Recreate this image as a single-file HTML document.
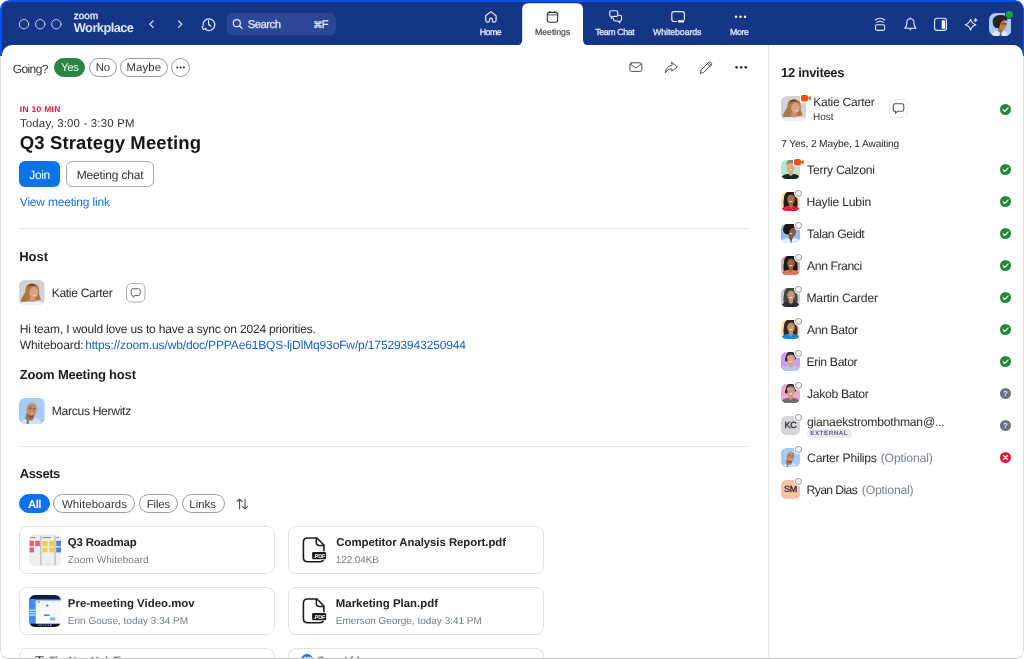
<!DOCTYPE html>
<html lang="en">
<head>
<meta charset="utf-8">
<title>Zoom Workplace - Meetings</title>
<style>
*{box-sizing:border-box;margin:0;padding:0}
html,body{width:1024px;height:659px;overflow:hidden;background:#fff}
body{font-family:"Liberation Sans",sans-serif;color:#222;position:relative;text-rendering:geometricPrecision}
.abs,.t{position:absolute}
.t{white-space:nowrap;line-height:1;text-rendering:geometricPrecision}
#win{position:absolute;left:0;top:0;width:1024px;height:659px;overflow:hidden;border-radius:9px 9px 8px 8px;will-change:transform}
#blue{position:absolute;left:0;top:0;width:1024px;height:80px;background:#0b55e6;border-radius:9px 9px 0 0}
#hdr{position:absolute;left:2px;top:2px;width:1020.5px;height:70px;background:#153586;border-radius:7px 7px 0 0}
#body{position:absolute;left:0;top:56px;width:1024px;height:603px;background:#fff;border:1px solid #dedee0;border-bottom-color:#cbcbce;border-top:none;border-radius:0 0 8px 8px}
#bodytop{position:absolute;left:1.6px;top:44.6px;width:1021px;height:30px;background:#fff;border-radius:10px 10px 0 0}
.pill{position:absolute;height:19.2px;border:1px solid #939ca8;border-radius:10px;background:#fff}
.hr{position:absolute;height:1px;background:#e4e7eb}
.card{position:absolute;width:256px;height:47.5px;border:1px solid #dfe3e9;border-radius:8px;background:#fff}
.av{position:absolute;overflow:hidden}
.ring{position:absolute;width:9px;height:9px;border-radius:50%;background:#fff}
.ring:after{content:"";box-sizing:border-box;position:absolute;left:1px;top:1px;width:7px;height:7px;border-radius:50%;border:1px solid #8a8f96;background:#fff}
.st{position:absolute;left:1000px;width:11px;height:11px}
</style>
</head>
<body>
<div id="win">
<div id="blue"></div><div id="hdr"></div><div id="body"></div><div id="bodytop"></div>
<svg class="abs" style="left:0;top:0" width="1024" height="46" viewBox="0 0 1024 46" fill="none" stroke="#e6ebf7" stroke-width="1.1" stroke-linecap="round" stroke-linejoin="round">
<circle cx="24" cy="24.2" r="4.7" stroke="#d5dcf0" stroke-width="0.9"/><circle cx="40.2" cy="24.2" r="4.7" stroke="#d5dcf0" stroke-width="0.9"/><circle cx="56.3" cy="24.2" r="4.7" stroke="#d5dcf0" stroke-width="0.9"/>
<path d="M153.1 20.8 L149.8 24.1 L153.1 27.4" stroke-width="1.2"/><path d="M178.5 20.8 L181.8 24.1 L178.5 27.4" stroke-width="1.2"/>
<path d="M203.2 26.2 A5.9 5.9 0 1 1 205.6 29.6" stroke-width="1.2"/><path d="M202.0 26.6 L203.4 29.5 L206.2 28.2" stroke-width="1.1"/><path d="M208.6 20.6 V24.4 L211 26.2" stroke-width="1.2"/>
<rect x="226.8" y="13.1" width="109" height="22.1" rx="6" fill="#2c4795" stroke="none"/>
<circle cx="236.8" cy="23.2" r="3.5" stroke-width="1.2"/><path d="M239.4 25.8 L242 28.4" stroke-width="1.3"/>
<path d="M516.4 45.5 Q522.2 45.5 522.2 39.6 V9.5 Q522.2 3.2 528.5 3.2 H576.8 Q583 3.2 583 9.5 V39.6 Q583 45.5 588.8 45.5 Z" fill="#fff" stroke="none"/>
<path d="M490.9 11.6 L496.1 15.7 V20.3 Q496.1 22.1 494.3 22.1 H493.7 Q492.3 22.1 492.3 20.7 V19.5 A1.4 1.4 0 0 0 489.5 19.5 V20.7 Q489.5 22.1 488.1 22.1 H487.5 Q485.7 22.1 485.7 20.3 V15.7 Z" stroke-width="1.2"/>
<g stroke="#333" stroke-width="1.1"><rect x="547.3" y="12.4" width="10.4" height="9.8" rx="2.2"/><path d="M547.5 14.9 H557.5" stroke-width="0.9"/><path d="M549.8 11.2 V12.4 M554.8 11.2 V12.4"/></g>
<path d="M611.1 10.7 H616.3 Q617.7 10.7 617.7 12.1 V15 Q617.7 16.4 616.3 16.4 H613.2 L611.3 18.4 V16.4 H611.1 Q609.7 16.4 609.7 15 V12.1 Q609.7 10.7 611.1 10.7 Z" stroke-width="1.1"/>
<path d="M618 15.3 H620.1 Q621.5 15.3 621.5 16.7 V19.6 Q621.5 21 620.1 21 H619.9 V22.8 L617.9 21 H614.9 Q613.5 21 613.5 19.6 V18.2" stroke-width="1.1"/>
<rect x="671.8" y="11.6" width="12.6" height="9.9" rx="2.2" stroke-width="1.2"/><rect x="676.9" y="19.4" width="8.6" height="3.9" rx="1.9" fill="#153586" stroke="none"/><rect x="677.8" y="20.2" width="6.6" height="2.3" rx="1.15" fill="#fff" stroke="none"/>
<g fill="#fff" stroke="none"><circle cx="736" cy="16.8" r="1.25"/><circle cx="740.5" cy="16.8" r="1.25"/><circle cx="745" cy="16.8" r="1.25"/></g>
<rect x="875.5" y="24.8" width="9.1" height="5.6" rx="1.6" stroke-width="1.1"/><path d="M876.7 22.4 Q880 20.2 883.4 22.4" stroke-width="1.1"/><path d="M875.2 20 Q880 16.6 884.8 20" stroke-width="1.1"/>
<path d="M904.7 28.3 Q906.6 26.4 906.9 23.6 V22.2 A3.5 3.5 0 0 1 913.9 22.2 V23.6 Q914.2 26.4 916.1 28.3 Z" stroke-width="1.1"/><path d="M910.4 17.9 V18.6" stroke-width="1.1"/><path d="M909.2 28.6 Q910.4 31.6 911.6 28.6" stroke-width="1"/>
<rect x="934.6" y="18.2" width="11.9" height="12.2" rx="2.4" stroke-width="1.1"/><rect x="941.7" y="20.2" width="3.5" height="8.5" rx="0.5" fill="#fff" stroke="none"/>
<path d="M970.6 19.2 Q971.6 23.6 975.9 24.7 Q971.6 25.8 970.6 30.2 Q969.6 25.8 965.3 24.7 Q969.6 23.6 970.6 19.2 Z" stroke-width="1.1"/><path d="M975.6 18.4 Q975.9 19.9 977.3 20.2 Q975.9 20.5 975.6 22 Q975.3 20.5 973.9 20.2 Q975.3 19.9 975.6 18.4 Z" stroke-width="0.6" fill="#e6ebf7"/>
</svg>
<svg class="abs" style="left:988.6px;top:12.7px" width="22.8" height="23" viewBox="0 0 24 24"><defs><clipPath id="ua"><rect width="24" height="24" rx="7"/></clipPath></defs><g clip-path="url(#ua)"><rect width="24" height="24" fill="#a9cdf7"/><path d="M2.5 24 Q4 19.6 8.6 18.6 L13 21 L16 18.8 Q19 19.6 20 24 Z" fill="#e4eaf2"/><path d="M11.4 21.4 L12.8 21 L13.4 24 L10.8 24 Z" fill="#3560b0"/><path d="M10.4 14.6 L15 17.2 L13 21.2 L9.2 19 Z" fill="#a9683f"/><ellipse cx="14.6" cy="12.6" rx="3.9" ry="5.2" fill="#bf7a52"/><path d="M4 10.5 C3 4.5 8 1.6 12.6 2 C17.6 1.6 20 5 19.2 8.6 C17.6 7 15.2 7.2 13.6 8.6 C11.8 10.2 11.6 13 10.6 15.8 C6 16.8 4.4 13.6 4 10.5 Z" fill="#2b211d"/><path d="M13.2 11.4 H18.6" stroke="#1a1a1a" stroke-width="0.8"/><path d="M15.6 14.8 Q17 15.4 18 14.4 Q17.4 16 15.6 14.8 Z" fill="#fff"/></g></svg>
<div class="abs" style="left:1005.1px;top:10px;width:8.8px;height:8.8px;border-radius:50%;background:#153586"></div>
<div class="abs" style="left:1006.1px;top:11px;width:6.8px;height:6.8px;border-radius:50%;background:#0ea83c"></div>

<div class="pill" style="left:53.7px;top:57.6px;width:31.8px;background:#278443;border-color:#278443"></div>
<div class="pill" style="left:88.9px;top:57.6px;width:27.9px"></div>
<div class="pill" style="left:120px;top:57.6px;width:47.8px"></div>
<div class="pill" style="left:171.4px;top:57.6px;width:19px"></div>
<svg class="abs" style="left:171.4px;top:57.6px" width="19" height="19"><g fill="#333"><circle cx="6.3" cy="9.5" r="1.05"/><circle cx="9.6" cy="9.5" r="1.05"/><circle cx="12.9" cy="9.5" r="1.05"/></g></svg>
<svg class="abs" style="left:620px;top:55px" width="140" height="26" viewBox="620 55 140 26" fill="none" stroke="#505054" stroke-width="1" stroke-linecap="round" stroke-linejoin="round">
<rect x="629.9" y="62.8" width="11.9" height="8.6" rx="1.6"/><path d="M630.3 64.2 L635.8 67.9 L641.4 64.2"/>
<path d="M671.8 62.4 L677.4 66.8 L671.8 71.2 V68.9 Q667.6 68.6 665.4 72.8 Q665.6 66.4 671.8 65.4 Z"/>
<path d="M700.4 73 L701.1 69.9 L708.8 62.2 Q709.7 61.4 710.6 62.2 L711.5 63.1 Q712.3 64 711.5 64.9 L703.6 72.4 Z M707.4 63.8 L709.9 66.3 M708.5 62.7 L711 65.2"/>
<g fill="#333" stroke="none"><circle cx="736.6" cy="67.3" r="1.35"/><circle cx="741.2" cy="67.3" r="1.35"/><circle cx="745.8" cy="67.3" r="1.35"/></g>
</svg>
<div class="abs" style="left:19px;top:161.4px;width:41px;height:26px;border-radius:6px;background:#0e72ed"></div>
<div class="abs" style="left:66.4px;top:161.4px;width:87.4px;height:26px;border-radius:6px;border:1px solid #a4abb5"></div>
<div class="hr" style="left:19.5px;top:228px;width:728.5px"></div>
<svg class="av" style="left:19.4px;top:279.7px;border-radius:6px" width="25.5" height="25.8" viewBox="0 0 26 26"><rect width="26" height="26" fill="#d2d2d6"/><path d="M14 3.6 C9 3 6.2 7 6.6 11 C6.2 14 3 16 1.6 21.4 L8 23 L12 21 L18 21 C20.6 20.6 21.6 19.6 22.6 20.6 C21.6 17 20 15 20.6 11 C20.6 6 18 3.8 14 3.6 Z" fill="#a87844"/><path d="M14 3.6 C11 3.4 9 5 8.2 7.4 C10.4 5.6 13.6 5 17 6 C16.4 4.6 15.4 3.8 14 3.6 Z" fill="#5e3d22"/><path d="M11 16.6 L16.6 18 L16.4 22 L10.6 22 Z" fill="#cf9276"/><ellipse cx="15" cy="12.4" rx="4.5" ry="5.6" transform="rotate(8 15 12.4)" fill="#dba084"/><path d="M13.4 14.6 Q16 16 18 13.8 Q16.8 17.4 13.4 14.6 Z" fill="#fff"/><path d="M0 26 V24 Q5 21.4 10 21.8 Q13.4 23.4 17 21.8 Q22 21.4 26 24 V26 Z" fill="#eef0f5"/></svg>
<svg class="abs" style="left:126.4px;top:282.9px" width="20" height="20" fill="none" stroke="#58585c" stroke-linejoin="round"><rect x="0.5" y="0.5" width="18.5" height="18.5" rx="4.8" stroke="#a6aeba"/><path d="M6.75 5.75 H12.55 Q14.15 5.75 14.15 7.35 V10.85 Q14.15 12.45 12.55 12.45 H9 L7 14.4 V12.45 H6.75 Q5.15 12.45 5.15 10.85 V7.35 Q5.15 5.75 6.75 5.75 Z" stroke-width="0.95"/></svg>
<svg class="av" style="left:19.4px;top:398.3px;border-radius:6px" width="25.5" height="25.8" viewBox="0 0 26 26"><rect width="26" height="26" fill="#a5cbf7"/><path d="M1 26 Q3 22.4 8 21 L17 20.6 Q21.4 21.6 23 26 Z" fill="#d2def1"/><path d="M7.6 15 L15.6 18 L14 22.6 L8.4 23.4 L6.4 20.6 Z" fill="#a87450"/><ellipse cx="12.9" cy="11.6" rx="5.2" ry="7" transform="rotate(12 12.9 11.6)" fill="#c08a62"/><path d="M10 6.4 Q13.4 3.8 17 6.6 Q13.6 5.8 10 6.4 Z" fill="#e0b088"/><path d="M8.6 15.6 Q12 19.6 16 16.4 Q15 20.8 11.6 20.4 Q9.2 19.6 8.6 15.6 Z" fill="#7a5238" opacity="0.75"/><path d="M10.6 15.2 Q12.8 16.6 15 14.8 Q13.8 17.6 10.6 15.2 Z" fill="#fff"/><ellipse cx="11.6" cy="10.2" rx="1" ry="0.6" fill="#4a2e1e"/><ellipse cx="15.4" cy="10.8" rx="1" ry="0.6" fill="#4a2e1e"/><path d="M7.4 25.8 L8.8 22.6 L10.4 25.8 Z" fill="#3c64b0"/></svg>
<div class="hr" style="left:19.5px;top:445.5px;width:728.5px"></div>
<div class="pill" style="left:19.1px;top:494.3px;width:30.7px;background:#0e72ed;border-color:#0e72ed"></div>
<div class="pill" style="left:53.3px;top:494.3px;width:81.8px"></div>
<div class="pill" style="left:138.6px;top:494.3px;width:39.7px"></div>
<div class="pill" style="left:181.8px;top:494.3px;width:43.2px"></div>
<svg class="abs" style="left:235px;top:496.5px" width="16" height="14" fill="none" stroke="#444" stroke-width="1.05" stroke-linecap="round" stroke-linejoin="round"><path d="M4.6 12 V2 M2 4.6 L4.6 2 L7.2 4.6 M10 2 V12 M7.4 9.4 L10 12 L12.6 9.4"/></svg>
<div class="card" style="left:19px;top:526px"><svg class="abs" style="left:8.8px;top:7.2px;border-radius:5px" width="32" height="32" viewBox="0 0 32 32"><rect width="32" height="32" fill="#efeff1"/><path d="M11.9 2 V31 M26 2 V31" stroke="#77777c" stroke-width="0.55"/><path d="M1.5 3.6 H6.5 M13.5 3.6 H22 M27.5 3.6 H30" stroke="#55555a" stroke-width="0.7"/><g fill="#e0626c"><rect x="0.6" y="6.8" width="4.3" height="5.4"/><rect x="6.2" y="6.8" width="4.6" height="5.4"/><rect x="0.6" y="13.4" width="4.3" height="5"/></g><g fill="#f3cb4c"><rect x="13.5" y="6.8" width="5" height="5.4"/><rect x="20.2" y="6.8" width="5" height="5.4"/><rect x="13.5" y="13.4" width="5" height="5"/><rect x="20.2" y="13.4" width="5" height="5"/></g><g fill="#4f7fdb"><rect x="27.2" y="6.8" width="4.8" height="5.4"/><rect x="27.2" y="13.4" width="4.8" height="5"/></g></svg></div>
<div class="card" style="left:288px;top:526px"><svg class="abs" style="left:12px;top:9px" width="28" height="29" viewBox="0 0 28 29" fill="none" stroke="#1b1b1d" stroke-width="1.6" stroke-linejoin="round" stroke-linecap="round"><path d="M16 2 H6.6 Q2.4 2 2.4 6.2 V21.6 Q2.4 25.8 6.6 25.8 H18.7 Q22.9 25.8 22.9 21.6 V9 Z"/><path d="M15.3 2.6 V6.6 Q15.3 9.4 18.1 9.4 H22.4" stroke-width="1.5"/><rect x="10.4" y="15.3" width="15.4" height="8.7" rx="1.6" fill="#fff" stroke="none"/><rect x="11.1" y="16" width="14" height="7.3" rx="1.2" fill="#1b1b1d" stroke="none"/><text x="18.2" y="21.7" font-family="Liberation Sans, sans-serif" font-size="5.4" font-weight="bold" fill="#fff" stroke="none" text-anchor="middle" letter-spacing="-0.15">.PDF</text></svg></div>
<div class="card" style="left:19px;top:587px"><svg class="abs" style="left:9.2px;top:6.9px;border-radius:6px" width="32" height="32" viewBox="0 0 32 32"><rect width="32" height="32" fill="#f8fafe"/><rect width="32" height="4.2" fill="#111d36"/><rect y="4" width="32" height="1.4" fill="#2f6fcd"/><rect y="4" width="6.7" height="25" fill="#3c8cf1"/><rect y="28.7" width="32" height="3.3" fill="#12141c"/><rect x="7.4" y="6.6" width="24" height="0.8" fill="#dfe6f2"/><rect x="8.6" y="6.2" width="2" height="1.4" fill="#3c8cf1"/><rect x="17.2" y="9.4" width="2.2" height="2.2" rx="0.5" fill="#3f7fe8"/><rect x="15" y="19.4" width="5.6" height="1.6" fill="#3f8ff0"/><rect x="21" y="22.4" width="5.2" height="3" fill="#7db4f5"/><rect x="0.4" y="14.4" width="6" height="1.3" fill="#d6e8ff"/><rect x="0.4" y="16.9" width="6" height="1.3" fill="#d6e8ff"/><rect x="0.4" y="19.4" width="6" height="1.3" fill="#d6e8ff"/><g fill="#4a78d0"><rect x="9" y="29.4" width="1.6" height="1.6"/><rect x="11.4" y="29.4" width="1.6" height="1.6"/><rect x="13.8" y="29.4" width="1.6" height="1.6" fill="#2a62e0"/><rect x="16.2" y="29.4" width="1.6" height="1.6" fill="#c04848"/><rect x="18.6" y="29.4" width="1.6" height="1.6"/><rect x="21" y="29.4" width="1.6" height="1.6" fill="#8a8e98"/></g></svg></div>
<div class="card" style="left:288px;top:587px"><svg class="abs" style="left:12px;top:9px" width="28" height="29" viewBox="0 0 28 29" fill="none" stroke="#1b1b1d" stroke-width="1.6" stroke-linejoin="round" stroke-linecap="round"><path d="M16 2 H6.6 Q2.4 2 2.4 6.2 V21.6 Q2.4 25.8 6.6 25.8 H18.7 Q22.9 25.8 22.9 21.6 V9 Z"/><path d="M15.3 2.6 V6.6 Q15.3 9.4 18.1 9.4 H22.4" stroke-width="1.5"/><rect x="10.4" y="15.3" width="15.4" height="8.7" rx="1.6" fill="#fff" stroke="none"/><rect x="11.1" y="16" width="14" height="7.3" rx="1.2" fill="#1b1b1d" stroke="none"/><text x="18.2" y="21.7" font-family="Liberation Sans, sans-serif" font-size="5.4" font-weight="bold" fill="#fff" stroke="none" text-anchor="middle" letter-spacing="-0.15">.PDF</text></svg></div>
<div class="card" style="left:19px;top:647.6px;border-bottom:none;border-radius:8px 8px 0 0;height:11px"><div class="t" style="left:15.4px;top:5.4px;font-size:12px;line-height:12px;font-weight:bold;color:#111;font-family:'Liberation Serif',serif">T</div></div>
<div class="card" style="left:288px;top:647.6px;border-bottom:none;border-radius:8px 8px 0 0;height:11px"><div class="abs" style="left:12.1px;top:5.4px;width:12.3px;height:12.3px;border-radius:50%;background:#1f6fee"></div><div class="t" style="left:14.4px;top:7.6px;font-size:6px;line-height:6px;font-weight:bold;color:#fff">zm</div></div>
<div class="abs" style="left:767.5px;top:45px;width:1px;height:613px;background:#e4e6ea"></div>
<svg class="av" style="left:781.2px;top:96px;border-radius:6px" width="25" height="25" viewBox="0 0 20 20"><g transform="scale(0.7692)"><rect width="26" height="26" fill="#d2d2d6"/><path d="M14 3.6 C9 3 6.2 7 6.6 11 C6.2 14 3 16 1.6 21.4 L8 23 L12 21 L18 21 C20.6 20.6 21.6 19.6 22.6 20.6 C21.6 17 20 15 20.6 11 C20.6 6 18 3.8 14 3.6 Z" fill="#a87844"/><path d="M14 3.6 C11 3.4 9 5 8.2 7.4 C10.4 5.6 13.6 5 17 6 C16.4 4.6 15.4 3.8 14 3.6 Z" fill="#5e3d22"/><path d="M11 16.6 L16.6 18 L16.4 22 L10.6 22 Z" fill="#cf9276"/><ellipse cx="15" cy="12.4" rx="4.5" ry="5.6" transform="rotate(8 15 12.4)" fill="#dba084"/><path d="M13.4 14.6 Q16 16 18 13.8 Q16.8 17.4 13.4 14.6 Z" fill="#fff"/><path d="M0 26 V24 Q5 21.4 10 21.8 Q13.4 23.4 17 21.8 Q22 21.4 26 24 V26 Z" fill="#eef0f5"/></g></svg>
<svg class="abs" style="left:799.6px;top:93.6px" width="12" height="9" viewBox="0 0 12 9"><rect x="0" y="0" width="9.6" height="8.6" rx="2.6" fill="#fff"/><rect x="1" y="1" width="7" height="6.4" rx="1.7" fill="#f4510b"/><path d="M8 4.2 L10.4 2.2 V6.2 Z" fill="#f4510b" stroke="#f4510b" stroke-width="0.6" stroke-linejoin="round"/></svg>
<svg class="abs" style="left:888.8px;top:99px" width="20" height="20" fill="none" stroke="#505054" stroke-linejoin="round"><rect x="0.5" y="0.5" width="18.1" height="18.1" rx="4.6" stroke="#e4e7ed"/><path d="M6.1 4.8 H13 Q14.8 4.8 14.8 6.6 V10.4 Q14.8 12.2 13 12.2 H8.6 L6.5 14.4 V12.2 H6.1 Q4.3 12.2 4.3 10.4 V6.6 Q4.3 4.8 6.1 4.8 Z" stroke-width="1.1"/></svg>
<svg class="st" style="top:103.5px" viewBox="0 0 11 11"><circle cx="5.5" cy="5.5" r="5.5" fill="#26843f"/><path d="M3 5.7 L4.8 7.5 L8.1 3.9" fill="none" stroke="#fff" stroke-width="1.15" stroke-linecap="round" stroke-linejoin="round"/></svg>
<svg class="av" style="left:781px;top:159.9px;border-radius:5.4px" width="19" height="19" viewBox="0 0 20 20"><rect width="20" height="20" fill="#b5e6c8"/><g transform="translate(10 21.5) scale(1.28) translate(-10 -20)"><path d="M1.6 20 Q2.4 15.4 7.4 14.8 L13 14.8 Q18 15.4 18.6 20 Z" fill="#1d2228"/><path d="M8.6 12 H12 V15.2 L10.3 16.4 L8.6 15.2 Z" fill="#d9a98a"/><ellipse cx="10.2" cy="9.2" rx="3.2" ry="4.1" fill="#d9a98a"/><path d="M6.6 7.6 Q6.4 3 10.2 3 Q14 3 13.8 7.6 Q12.4 5.4 10.2 5.6 Q8 5.4 6.6 7.6 Z" fill="#8c8274"/><path d="M8.8 10.8 Q10.3 12.4 11.8 10.8 Z" fill="#fff"/></g></svg>
<svg class="abs" style="left:792.8px;top:157.9px" width="12" height="9" viewBox="0 0 12 9"><rect x="0" y="0" width="9.6" height="8.6" rx="2.6" fill="#fff"/><rect x="1" y="1" width="7" height="6.4" rx="1.7" fill="#f4510b"/><path d="M8 4.2 L10.4 2.2 V6.2 Z" fill="#f4510b" stroke="#f4510b" stroke-width="0.6" stroke-linejoin="round"/></svg>
<svg class="st" style="top:164.0px" viewBox="0 0 11 11"><circle cx="5.5" cy="5.5" r="5.5" fill="#26843f"/><path d="M3 5.7 L4.8 7.5 L8.1 3.9" fill="none" stroke="#fff" stroke-width="1.15" stroke-linecap="round" stroke-linejoin="round"/></svg>
<svg class="av" style="left:781px;top:191.9px;border-radius:5.4px" width="19" height="19" viewBox="0 0 20 20"><rect width="20" height="20" fill="#fbe2ad"/><g transform="translate(10 21.5) scale(1.28) translate(-10 -20)"><path d="M4.6 9 Q4.6 2.6 10.2 2.6 Q15.8 2.6 15.6 9 Q16.4 13.6 15.2 16.4 L5 16.8 Q3.6 13 4.6 9 Z" fill="#2a1a16"/><path d="M1.6 20 Q2.4 15.4 7.4 14.8 L13 14.8 Q18 15.4 18.6 20 Z" fill="#e0203c"/><path d="M8.6 12 H12 V15.2 L10.3 16.4 L8.6 15.2 Z" fill="#a86a4a"/><ellipse cx="10.4" cy="9.4" rx="3.1" ry="4" fill="#a86a4a"/><path d="M8.8 10.8 Q10.3 12.4 11.8 10.8 Z" fill="#fff"/></g></svg>
<div class="ring" style="left:793.9px;top:189.1px"></div>
<svg class="st" style="top:196.0px" viewBox="0 0 11 11"><circle cx="5.5" cy="5.5" r="5.5" fill="#26843f"/><path d="M3 5.7 L4.8 7.5 L8.1 3.9" fill="none" stroke="#fff" stroke-width="1.15" stroke-linecap="round" stroke-linejoin="round"/></svg>
<svg class="av" style="left:781px;top:223.9px;border-radius:5.4px" width="19" height="19" viewBox="0 0 20 20"><rect width="20" height="20" fill="#8dbbf5"/><g transform="translate(10 21.5) scale(1.28) translate(-10 -20)"><path d="M1.6 20 Q2.4 15.4 7.4 14.8 L13 14.8 Q18 15.4 18.6 20 Z" fill="#e6ecf4"/><path d="M8.6 12 H12 V15.2 L10.3 16.4 L8.6 15.2 Z" fill="#8a5a3c"/><ellipse cx="11.4" cy="9.8" rx="3.1" ry="4" fill="#8a5a3c"/><path d="M4 8.6 Q3.4 2.4 9.6 2.2 Q15.4 2 15.2 7 Q13 5.8 11 6.8 Q8.8 7.8 9 11.6 Q4.4 12.4 4 8.6 Z" fill="#1f1714"/><path d="M8.8 10.8 Q10.3 12.4 11.8 10.8 Z" fill="#fff"/><path d="M9.6 15.4 L10.4 20 L11.4 15.4 Z" fill="#3b5ca8"/></g></svg>
<div class="ring" style="left:793.9px;top:221.1px"></div>
<svg class="st" style="top:228.0px" viewBox="0 0 11 11"><circle cx="5.5" cy="5.5" r="5.5" fill="#26843f"/><path d="M3 5.7 L4.8 7.5 L8.1 3.9" fill="none" stroke="#fff" stroke-width="1.15" stroke-linecap="round" stroke-linejoin="round"/></svg>
<svg class="av" style="left:781px;top:255.9px;border-radius:5.4px" width="19" height="19" viewBox="0 0 20 20"><rect width="20" height="20" fill="#cdb3a9"/><g transform="translate(10 21.5) scale(1.28) translate(-10 -20)"><path d="M4.6 9 Q4.6 2.6 10.2 2.6 Q15.8 2.6 15.6 9 Q16.4 13.6 15.2 16.4 L5 16.8 Q3.6 13 4.6 9 Z" fill="#1d1512"/><path d="M1.6 20 Q2.4 15.4 7.4 14.8 L13 14.8 Q18 15.4 18.6 20 Z" fill="#e8705c"/><path d="M8.6 12 H12 V15.2 L10.3 16.4 L8.6 15.2 Z" fill="#9a6244"/><ellipse cx="10.4" cy="9.4" rx="3.1" ry="4" fill="#9a6244"/><path d="M8.8 10.8 Q10.3 12.4 11.8 10.8 Z" fill="#fff"/></g></svg>
<div class="ring" style="left:793.9px;top:253.1px"></div>
<svg class="st" style="top:260.0px" viewBox="0 0 11 11"><circle cx="5.5" cy="5.5" r="5.5" fill="#26843f"/><path d="M3 5.7 L4.8 7.5 L8.1 3.9" fill="none" stroke="#fff" stroke-width="1.15" stroke-linecap="round" stroke-linejoin="round"/></svg>
<svg class="av" style="left:781px;top:287.9px;border-radius:5.4px" width="19" height="19" viewBox="0 0 20 20"><rect width="20" height="20" fill="#c8cad2"/><g transform="translate(10 21.5) scale(1.28) translate(-10 -20)"><path d="M4.6 9 Q4.6 2.6 10.2 2.6 Q15.8 2.6 15.6 9 Q16.4 13.6 15.2 16.4 L5 16.8 Q3.6 13 4.6 9 Z" fill="#4a4440"/><path d="M1.6 20 Q2.4 15.4 7.4 14.8 L13 14.8 Q18 15.4 18.6 20 Z" fill="#2a2c34"/><path d="M8.6 12 H12 V15.2 L10.3 16.4 L8.6 15.2 Z" fill="#c49474"/><ellipse cx="10.4" cy="9.4" rx="3.1" ry="4" fill="#c49474"/><path d="M8.8 10.8 Q10.3 12.4 11.8 10.8 Z" fill="#fff"/></g></svg>
<div class="ring" style="left:793.9px;top:285.1px"></div>
<svg class="st" style="top:292.0px" viewBox="0 0 11 11"><circle cx="5.5" cy="5.5" r="5.5" fill="#26843f"/><path d="M3 5.7 L4.8 7.5 L8.1 3.9" fill="none" stroke="#fff" stroke-width="1.15" stroke-linecap="round" stroke-linejoin="round"/></svg>
<svg class="av" style="left:781px;top:319.9px;border-radius:5.4px" width="19" height="19" viewBox="0 0 20 20"><rect width="20" height="20" fill="#fbe2ad"/><g transform="translate(10 21.5) scale(1.28) translate(-10 -20)"><path d="M4.6 9 Q4.6 2.6 10.2 2.6 Q15.8 2.6 15.6 9 Q16.4 13.6 15.2 16.4 L5 16.8 Q3.6 13 4.6 9 Z" fill="#3a2a24"/><path d="M1.6 20 Q2.4 15.4 7.4 14.8 L13 14.8 Q18 15.4 18.6 20 Z" fill="#1f86d8"/><path d="M8.6 12 H12 V15.2 L10.3 16.4 L8.6 15.2 Z" fill="#c98f70"/><ellipse cx="10.4" cy="9.4" rx="3.1" ry="4" fill="#c98f70"/><path d="M8.8 10.8 Q10.3 12.4 11.8 10.8 Z" fill="#fff"/></g></svg>
<div class="ring" style="left:793.9px;top:317.1px"></div>
<svg class="st" style="top:324.0px" viewBox="0 0 11 11"><circle cx="5.5" cy="5.5" r="5.5" fill="#26843f"/><path d="M3 5.7 L4.8 7.5 L8.1 3.9" fill="none" stroke="#fff" stroke-width="1.15" stroke-linecap="round" stroke-linejoin="round"/></svg>
<svg class="av" style="left:781px;top:351.9px;border-radius:5.4px" width="19" height="19" viewBox="0 0 20 20"><rect width="20" height="20" fill="#c7a2ef"/><g transform="translate(10 21.5) scale(1.28) translate(-10 -20)"><path d="M1.6 20 Q2.4 15.4 7.4 14.8 L13 14.8 Q18 15.4 18.6 20 Z" fill="#b7c7e8"/><path d="M8.6 12 H12 V15.2 L10.3 16.4 L8.6 15.2 Z" fill="#d9a585"/><ellipse cx="10.2" cy="9.2" rx="3.2" ry="4.1" fill="#d9a585"/><path d="M6.6 7.6 Q6.4 3 10.2 3 Q14 3 13.8 7.6 Q12.4 5.4 10.2 5.6 Q8 5.4 6.6 7.6 Z" fill="#5a3e2c"/><path d="M8.8 10.8 Q10.3 12.4 11.8 10.8 Z" fill="#fff"/><path d="M6.4 9.4 Q6.2 3.6 10.2 3.6 Q14.2 3.6 14 9.4" fill="none" stroke="#222" stroke-width="0.9"/><rect x="5.6" y="8" width="1.8" height="3" rx="0.8" fill="#222"/></g></svg>
<div class="ring" style="left:793.9px;top:349.1px"></div>
<svg class="st" style="top:356.0px" viewBox="0 0 11 11"><circle cx="5.5" cy="5.5" r="5.5" fill="#26843f"/><path d="M3 5.7 L4.8 7.5 L8.1 3.9" fill="none" stroke="#fff" stroke-width="1.15" stroke-linecap="round" stroke-linejoin="round"/></svg>
<svg class="av" style="left:781px;top:383.9px;border-radius:5.4px" width="19" height="19" viewBox="0 0 20 20"><rect width="20" height="20" fill="#f4a5c8"/><g transform="translate(10 21.5) scale(1.28) translate(-10 -20)"><path d="M1.6 20 Q2.4 15.4 7.4 14.8 L13 14.8 Q18 15.4 18.6 20 Z" fill="#70706c"/><path d="M8.6 12 H12 V15.2 L10.3 16.4 L8.6 15.2 Z" fill="#c99a80"/><ellipse cx="10.2" cy="9.2" rx="3.2" ry="4.1" fill="#c99a80"/><path d="M6.6 7.6 Q6.4 3 10.2 3 Q14 3 13.8 7.6 Q12.4 5.4 10.2 5.6 Q8 5.4 6.6 7.6 Z" fill="#5a5652"/><path d="M8.8 10.8 Q10.3 12.4 11.8 10.8 Z" fill="#fff"/><path d="M6.4 9.4 Q6.2 3.6 10.2 3.6 Q14.2 3.6 14 9.4" fill="none" stroke="#222" stroke-width="0.9"/><rect x="5.6" y="8" width="1.8" height="3" rx="0.8" fill="#222"/></g></svg>
<div class="ring" style="left:793.9px;top:381.1px"></div>
<svg class="st" style="top:388.0px" viewBox="0 0 11 11"><circle cx="5.5" cy="5.5" r="5.5" fill="#6c7281"/><text x="5.5" y="8.1" font-family="Liberation Sans, sans-serif" font-size="7.4" font-weight="bold" fill="#e6e8ee" text-anchor="middle">?</text></svg>
<div class="av" style="left:781px;top:415.9px;width:19px;height:19px;border-radius:5.4px;background:#d6d6da;font-size:9px;-webkit-text-stroke:0.3px #2a2a2c;color:#2a2a2c;text-align:center;line-height:19.6px;letter-spacing:-0.2px">KC</div>
<div class="abs" style="left:806.6px;top:429.2px;width:45.2px;height:8.6px;border-radius:4.3px;background:#e9e9f1;color:#5d5d7c;font-size:6.3px;font-weight:bold;letter-spacing:0.5px;line-height:9.8px;text-align:center">EXTERNAL</div>
<div class="ring" style="left:793.9px;top:413.1px"></div>
<svg class="st" style="top:420.0px" viewBox="0 0 11 11"><circle cx="5.5" cy="5.5" r="5.5" fill="#6c7281"/><text x="5.5" y="8.1" font-family="Liberation Sans, sans-serif" font-size="7.4" font-weight="bold" fill="#e6e8ee" text-anchor="middle">?</text></svg>
<svg class="av" style="left:781px;top:447.9px;border-radius:5.4px" width="19" height="19" viewBox="0 0 20 20"><g transform="scale(0.7692)"><rect width="26" height="26" fill="#a5cbf7"/><path d="M1 26 Q3 22.4 8 21 L17 20.6 Q21.4 21.6 23 26 Z" fill="#d2def1"/><path d="M7.6 15 L15.6 18 L14 22.6 L8.4 23.4 L6.4 20.6 Z" fill="#a87450"/><ellipse cx="12.9" cy="11.6" rx="5.2" ry="7" transform="rotate(12 12.9 11.6)" fill="#c08a62"/><path d="M10 6.4 Q13.4 3.8 17 6.6 Q13.6 5.8 10 6.4 Z" fill="#e0b088"/><path d="M8.6 15.6 Q12 19.6 16 16.4 Q15 20.8 11.6 20.4 Q9.2 19.6 8.6 15.6 Z" fill="#7a5238" opacity="0.75"/><path d="M10.6 15.2 Q12.8 16.6 15 14.8 Q13.8 17.6 10.6 15.2 Z" fill="#fff"/><ellipse cx="11.6" cy="10.2" rx="1" ry="0.6" fill="#4a2e1e"/><ellipse cx="15.4" cy="10.8" rx="1" ry="0.6" fill="#4a2e1e"/><path d="M7.4 25.8 L8.8 22.6 L10.4 25.8 Z" fill="#3c64b0"/></g></svg>
<div class="ring" style="left:793.9px;top:445.1px"></div>
<svg class="st" style="top:452.0px" viewBox="0 0 11 11"><circle cx="5.5" cy="5.5" r="5.5" fill="#e0173d"/><path d="M3.5 3.5 L7.5 7.5 M7.5 3.5 L3.5 7.5" fill="none" stroke="#fff" stroke-width="1.15" stroke-linecap="round"/></svg>
<div class="av" style="left:781px;top:479.9px;width:19px;height:19px;border-radius:5.4px;background:#f9c3a3;font-size:9px;-webkit-text-stroke:0.3px #2a2a2c;color:#2a2a2c;text-align:center;line-height:19.6px;letter-spacing:-0.2px">SM</div>
<div class="ring" style="left:793.9px;top:477.1px"></div>
<!-- text -->
<div class="t" id="zoom" style="left:73.80px;top:11px;line-height:11px;font-size:9.8px;color:#e3e8f6;letter-spacing:0.110px;-webkit-text-stroke:0.35px #e3e8f6">zoom</div>
<div class="t" id="wp" style="left:73.80px;top:20px;line-height:15px;font-size:12.8px;color:#dde3f4;letter-spacing:-0.537px;font-weight:bold">Workplace</div>
<div class="t" id="search" style="left:247.70px;top:19px;line-height:12px;font-size:11.3px;color:#e3e8f6;letter-spacing:-0.499px;-webkit-text-stroke:0.28px #e3e8f6">Search</div>
<div class="t" id="cmdf" style="left:313.15px;top:19px;line-height:12px;font-size:11.2px;color:#e3e8f6;letter-spacing:-0.859px;-webkit-text-stroke:0.3px #e3e8f6"><span style="font-size:9.4px">&#8984;</span>F</div>
<div class="t" id="thome" style="left:479.70px;top:27px;line-height:10px;font-size:8.8px;color:#e3e8f6;letter-spacing:-0.483px;-webkit-text-stroke:0.3px #e3e8f6">Home</div>
<div class="t" id="tmeet" style="left:534.98px;top:27px;line-height:10px;font-size:8.8px;color:#4a4a4e;letter-spacing:-0.049px;-webkit-text-stroke:0.2px #4a4a4e">Meetings</div>
<div class="t" id="tchat" style="left:595.36px;top:27px;line-height:10px;font-size:8.8px;color:#e3e8f6;letter-spacing:-0.406px;-webkit-text-stroke:0.3px #e3e8f6">Team Chat</div>
<div class="t" id="twb" style="left:653.00px;top:27px;line-height:10px;font-size:8.8px;color:#e3e8f6;letter-spacing:-0.089px;-webkit-text-stroke:0.3px #e3e8f6">Whiteboards</div>
<div class="t" id="tmore" style="left:729.98px;top:27px;line-height:10px;font-size:8.8px;color:#e3e8f6;letter-spacing:-0.349px;-webkit-text-stroke:0.3px #e3e8f6">More</div>
<div class="t" id="going" style="left:12.81px;top:62px;line-height:14px;font-size:12px;color:#333;letter-spacing:-0.621px">Going?</div>
<div class="t" id="in10" style="left:19.80px;top:104px;line-height:10px;font-size:8.4px;color:#e0193e;letter-spacing:0.350px;font-weight:bold">IN 10 MIN</div>
<div class="t" id="today" style="left:19.90px;top:118px;line-height:12px;font-size:11.4px;color:#333;letter-spacing:0.197px">Today, 3:00 - 3:30 PM</div>
<div class="t" id="title" style="left:19.70px;top:132px;line-height:21px;font-size:18.5px;color:#161618;letter-spacing:0.139px;font-weight:bold">Q3 Strategy Meeting</div>
<div class="t" id="vml" style="left:19.80px;top:195px;line-height:14px;font-size:12px;color:#1a6fe0;letter-spacing:-0.192px">View meeting link</div>
<div class="t" id="host" style="left:19.13px;top:249px;line-height:15px;font-size:13px;color:#1c1c1e;letter-spacing:-0.007px;font-weight:bold">Host</div>
<div class="t" id="katie" style="left:51.65px;top:286px;line-height:14px;font-size:12.1px;color:#2a2a2c;letter-spacing:-0.312px">Katie Carter</div>
<div class="t" id="hi" style="left:19.85px;top:322px;line-height:14px;font-size:12px;color:#2a2a2c;letter-spacing:-0.187px">Hi team, I would love us to have a sync on 2024 priorities.</div>
<div class="t" id="wbl" style="left:19.70px;top:338px;line-height:14px;font-size:12px;color:#2a2a2c;letter-spacing:-0.078px">Whiteboard:</div>
<div class="t" id="link" style="left:85.13px;top:338px;line-height:14px;font-size:12px;color:#1761c4;letter-spacing:-0.136px">https://zoom.us/wb/doc/PPPAe61BQS-ljDlMq93oFw/p/175293943250944</div>
<div class="t" id="zmh" style="left:19.85px;top:367px;line-height:15px;font-size:13px;color:#1c1c1e;letter-spacing:-0.189px;font-weight:bold">Zoom Meeting host</div>
<div class="t" id="marcus" style="left:51.80px;top:404px;line-height:14px;font-size:12.1px;color:#2a2a2c;letter-spacing:-0.302px">Marcus Herwitz</div>
<div class="t" id="assets" style="left:19.80px;top:466px;line-height:15px;font-size:13px;color:#1c1c1e;letter-spacing:-0.418px;font-weight:bold">Assets</div>
<div class="t" id="inv" style="left:781.10px;top:65px;line-height:15px;font-size:13px;color:#1c1c1e;letter-spacing:-0.310px;font-weight:bold">12 invitees</div>
<div class="t" id="rkatie" style="left:813.31px;top:95px;line-height:14px;font-size:12px;color:#2a2a2c;letter-spacing:-0.230px">Katie Carter</div>
<div class="t" id="rhost" style="left:813.10px;top:112px;line-height:11px;font-size:10px;color:#333;letter-spacing:-0.021px">Host</div>
<div class="t" id="yes7" style="left:781.30px;top:139px;line-height:11px;font-size:10.2px;color:#2a2a2c;letter-spacing:-0.144px">7 Yes, 2 Maybe, 1 Awaiting</div>
<div class="t" id="pyes" style="left:61.10px;top:62px;line-height:12px;font-size:11.4px;color:#fff;letter-spacing:-0.397px">Yes</div>
<div class="t" id="pno" style="left:95.75px;top:62px;line-height:12px;font-size:11.4px;color:#333;letter-spacing:-0.112px">No</div>
<div class="t" id="pmaybe" style="left:126.47px;top:62px;line-height:12px;font-size:11.4px;color:#333;letter-spacing:0.119px">Maybe</div>
<div class="t" id="join" style="left:29.30px;top:168px;line-height:14px;font-size:12px;color:#fff;letter-spacing:-0.405px">Join</div>
<div class="t" id="mchat" style="left:76.75px;top:168px;line-height:14px;font-size:12px;color:#333;letter-spacing:-0.170px">Meeting chat</div>
<div class="t" id="pall" style="left:28.00px;top:499px;line-height:12px;font-size:11.4px;color:#fff;letter-spacing:-0.581px;font-weight:bold">All</div>
<div class="t" id="pwb" style="left:62.02px;top:499px;line-height:12px;font-size:11.4px;color:#333;letter-spacing:0.105px">Whiteboards</div>
<div class="t" id="pfiles" style="left:146.80px;top:499px;line-height:12px;font-size:11.4px;color:#333;letter-spacing:-0.191px">Files</div>
<div class="t" id="plinks" style="left:189.30px;top:499px;line-height:12px;font-size:11.4px;color:#333;letter-spacing:0.002px">Links</div>
<div class="t" id="c1t" style="left:67.85px;top:537px;line-height:12px;font-size:11.4px;color:#222;letter-spacing:-0.168px;font-weight:bold">Q3 Roadmap</div>
<div class="t" id="c1s" style="left:67.85px;top:555px;line-height:11px;font-size:10px;color:#737c88;letter-spacing:0.093px">Zoom Whiteboard</div>
<div class="t" id="c2t" style="left:336.30px;top:537px;line-height:12px;font-size:11.4px;color:#222;letter-spacing:-0.045px;font-weight:bold">Competitor Analysis Report.pdf</div>
<div class="t" id="c2s" style="left:335.81px;top:555px;line-height:11px;font-size:10px;color:#737c88;letter-spacing:-0.107px">122.04KB</div>
<div class="t" id="c3t" style="left:67.85px;top:598px;line-height:12px;font-size:11.4px;color:#222;letter-spacing:0.023px;font-weight:bold">Pre-meeting Video.mov</div>
<div class="t" id="c3s" style="left:67.85px;top:616px;line-height:11px;font-size:10px;color:#737c88;letter-spacing:0.008px">Erin Gouse, today 3:34 PM</div>
<div class="t" id="c4t" style="left:335.81px;top:598px;line-height:12px;font-size:11.4px;color:#222;letter-spacing:0.017px;font-weight:bold">Marketing Plan.pdf</div>
<div class="t" id="c4s" style="left:335.81px;top:616px;line-height:11px;font-size:10px;color:#737c88;letter-spacing:-0.005px">Emerson George, today 3:41 PM</div>
<div class="t" id="c5t" style="left:49.00px;top:655px;line-height:12px;font-size:10.6px;color:#4a4a4e;letter-spacing:-0.368px">The New York Times</div>
<div class="t" id="c6t" style="left:317.30px;top:655px;line-height:12px;font-size:10.6px;color:#4a4a4e;letter-spacing:-0.449px">Zoom Video</div>
<div class="t" id="n0" style="left:807.10px;top:163px;line-height:14px;font-size:12.2px;color:#2a2a2c;letter-spacing:-0.277px">Terry Calzoni</div>
<div class="t" id="n1" style="left:806.47px;top:195px;line-height:14px;font-size:12.2px;color:#2a2a2c;letter-spacing:-0.214px">Haylie Lubin</div>
<div class="t" id="n2" style="left:807.10px;top:227px;line-height:14px;font-size:12.2px;color:#2a2a2c;letter-spacing:-0.402px">Talan Geidt</div>
<div class="t" id="n3" style="left:807.10px;top:259px;line-height:14px;font-size:12.2px;color:#2a2a2c;letter-spacing:-0.426px">Ann Franci</div>
<div class="t" id="n4" style="left:806.47px;top:291px;line-height:14px;font-size:12.2px;color:#2a2a2c;letter-spacing:-0.250px">Martin Carder</div>
<div class="t" id="n5" style="left:807.10px;top:323px;line-height:14px;font-size:12.2px;color:#2a2a2c;letter-spacing:-0.400px">Ann Bator</div>
<div class="t" id="n6" style="left:806.47px;top:355px;line-height:14px;font-size:12.2px;color:#2a2a2c;letter-spacing:-0.335px">Erin Bator</div>
<div class="t" id="n7" style="left:807.10px;top:387px;line-height:14px;font-size:12.2px;color:#2a2a2c;letter-spacing:-0.340px">Jakob Bator</div>
<div class="t" id="n8" style="left:807.10px;top:415px;line-height:14px;font-size:12.2px;color:#2a2a2c;letter-spacing:-0.253px">gianaekstrombothman@...</div>
<div class="t" id="n9" style="left:807.10px;top:451px;line-height:14px;font-size:12.2px;color:#2a2a2c;letter-spacing:-0.258px">Carter Philips</div>
<div class="t" id="n10" style="left:806.47px;top:483px;line-height:14px;font-size:12.2px;color:#2a2a2c;letter-spacing:-0.607px">Ryan Dias</div>
<div class="t" id="opt9" style="left:880.73px;top:451px;line-height:14px;font-size:12.2px;color:#7a818b;letter-spacing:-0.155px">(Optional)</div>
<div class="t" id="opt10" style="left:861.81px;top:483px;line-height:14px;font-size:12.2px;color:#7a818b;letter-spacing:-0.183px">(Optional)</div>
<div class="abs" style="left:7px;top:658px;width:1010px;height:1px;background:#cbcbce"></div>
</div>
</body>
</html>
